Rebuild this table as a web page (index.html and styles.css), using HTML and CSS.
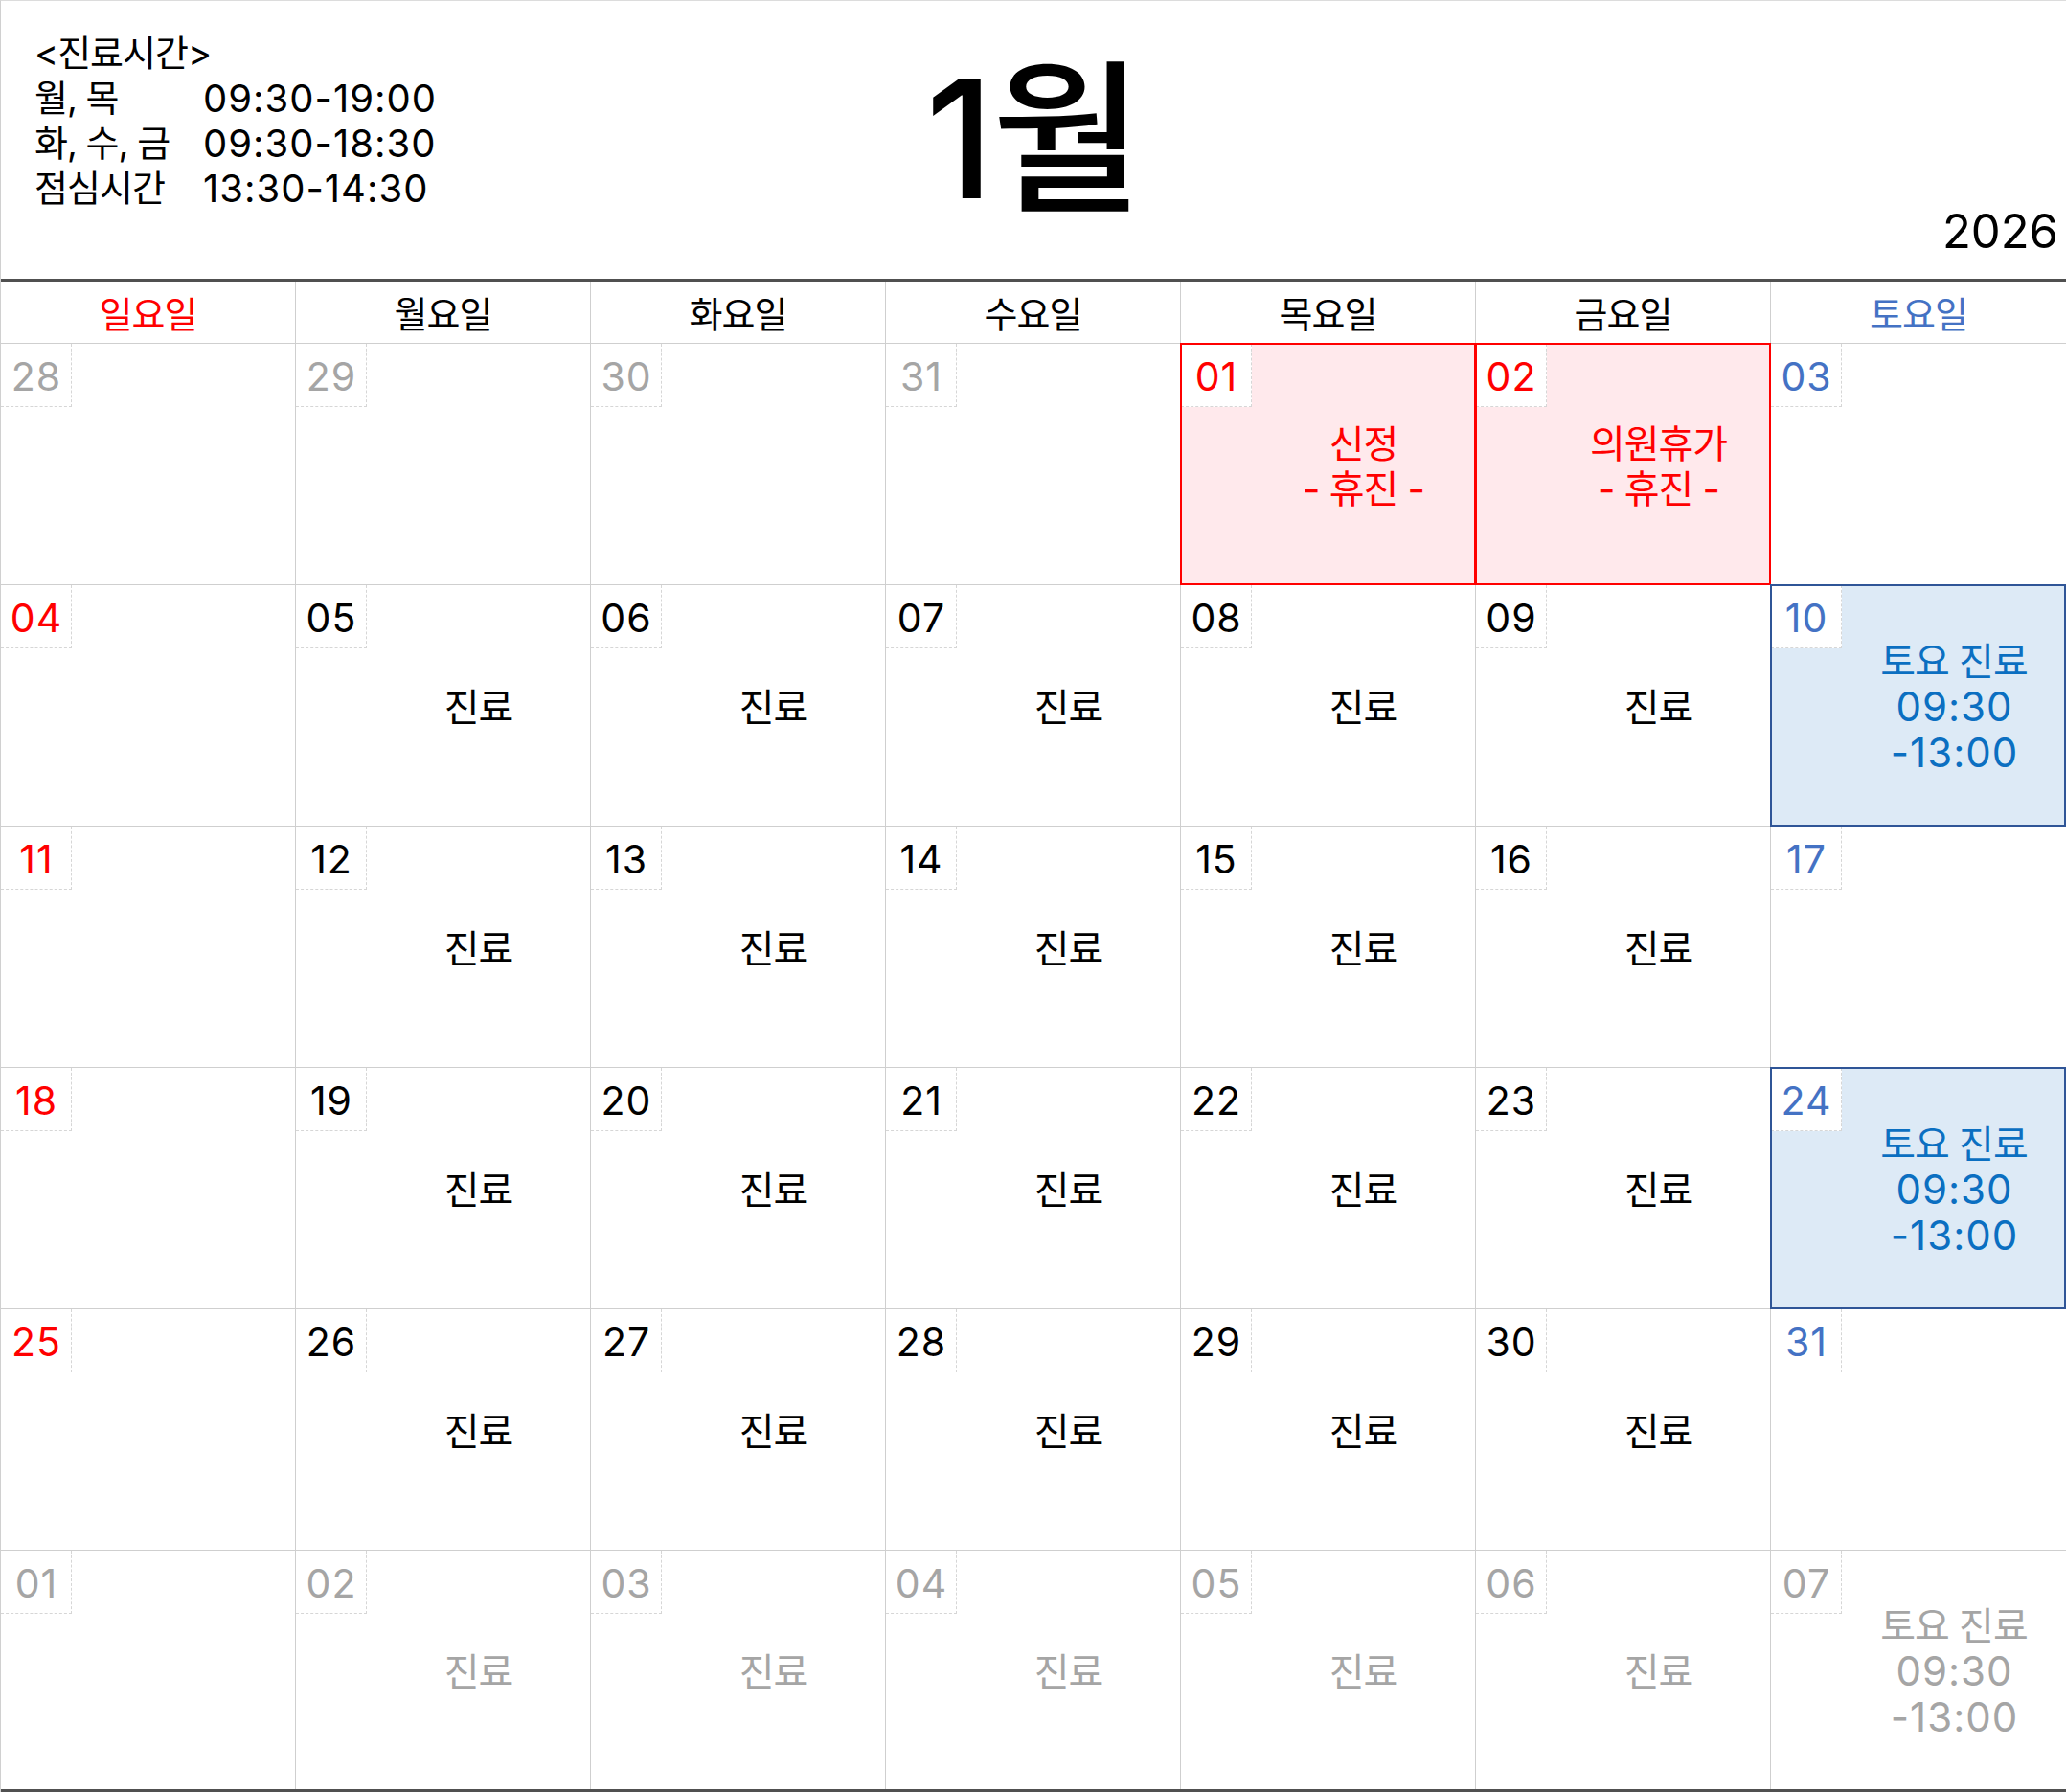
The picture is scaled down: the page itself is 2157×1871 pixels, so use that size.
FILE: index.html
```html
<!DOCTYPE html>
<html lang="ko">
<head>
<meta charset="utf-8">
<title>1월 진료 달력</title>
<link rel="stylesheet" href="styles.css">
</head>
<body>
<div class="page">
  <header class="top">
    <div class="hours">
      <div class="hours-title">&lt;진료시간&gt;</div>
      <span class="lbl">월, 목</span><span class="tm">09:30-19:00</span>
      <span class="lbl">화, 수, 금</span><span class="tm">09:30-18:30</span>
      <span class="lbl">점심시간</span><span class="tm">13:30-14:30</span>
    </div>
    <h1 class="month">1월</h1>
    <div class="year">2026</div>
  </header>

  <div class="cal">
    <div class="wd sun">일요일</div>
    <div class="wd">월요일</div>
    <div class="wd">화요일</div>
    <div class="wd">수요일</div>
    <div class="wd">목요일</div>
    <div class="wd">금요일</div>
    <div class="wd sat">토요일</div>

    <div class="cell"><div class="dnum muted">28</div><div class="note"></div></div>
    <div class="cell"><div class="dnum muted">29</div><div class="note"></div></div>
    <div class="cell"><div class="dnum muted">30</div><div class="note"></div></div>
    <div class="cell"><div class="dnum muted">31</div><div class="note"></div></div>
    <div class="cell holiday"><div class="dnum red">01</div><div class="note red">신정<br>- 휴진 -</div></div>
    <div class="cell holiday"><div class="dnum red">02</div><div class="note red">의원휴가<br>- 휴진 -</div></div>
    <div class="cell"><div class="dnum blue">03</div><div class="note"></div></div>

    <div class="cell"><div class="dnum red">04</div><div class="note"></div></div>
    <div class="cell"><div class="dnum">05</div><div class="note">진료</div></div>
    <div class="cell"><div class="dnum">06</div><div class="note">진료</div></div>
    <div class="cell"><div class="dnum">07</div><div class="note">진료</div></div>
    <div class="cell"><div class="dnum">08</div><div class="note">진료</div></div>
    <div class="cell"><div class="dnum">09</div><div class="note">진료</div></div>
    <div class="cell satbox"><div class="dnum blue">10</div><div class="note satnote">토요 진료<br><span class="num">09:30</span><br><span class="num">-13:00</span></div></div>

    <div class="cell"><div class="dnum red">11</div><div class="note"></div></div>
    <div class="cell"><div class="dnum">12</div><div class="note">진료</div></div>
    <div class="cell"><div class="dnum">13</div><div class="note">진료</div></div>
    <div class="cell"><div class="dnum">14</div><div class="note">진료</div></div>
    <div class="cell"><div class="dnum">15</div><div class="note">진료</div></div>
    <div class="cell"><div class="dnum">16</div><div class="note">진료</div></div>
    <div class="cell"><div class="dnum blue">17</div><div class="note"></div></div>

    <div class="cell"><div class="dnum red">18</div><div class="note"></div></div>
    <div class="cell"><div class="dnum">19</div><div class="note">진료</div></div>
    <div class="cell"><div class="dnum">20</div><div class="note">진료</div></div>
    <div class="cell"><div class="dnum">21</div><div class="note">진료</div></div>
    <div class="cell"><div class="dnum">22</div><div class="note">진료</div></div>
    <div class="cell"><div class="dnum">23</div><div class="note">진료</div></div>
    <div class="cell satbox"><div class="dnum blue">24</div><div class="note satnote">토요 진료<br><span class="num">09:30</span><br><span class="num">-13:00</span></div></div>

    <div class="cell"><div class="dnum red">25</div><div class="note"></div></div>
    <div class="cell"><div class="dnum">26</div><div class="note">진료</div></div>
    <div class="cell"><div class="dnum">27</div><div class="note">진료</div></div>
    <div class="cell"><div class="dnum">28</div><div class="note">진료</div></div>
    <div class="cell"><div class="dnum">29</div><div class="note">진료</div></div>
    <div class="cell"><div class="dnum">30</div><div class="note">진료</div></div>
    <div class="cell"><div class="dnum blue">31</div><div class="note"></div></div>

    <div class="cell"><div class="dnum muted">01</div><div class="note"></div></div>
    <div class="cell"><div class="dnum muted">02</div><div class="note muted">진료</div></div>
    <div class="cell"><div class="dnum muted">03</div><div class="note muted">진료</div></div>
    <div class="cell"><div class="dnum muted">04</div><div class="note muted">진료</div></div>
    <div class="cell"><div class="dnum muted">05</div><div class="note muted">진료</div></div>
    <div class="cell"><div class="dnum muted">06</div><div class="note muted">진료</div></div>
    <div class="cell"><div class="dnum muted">07</div><div class="note muted">토요 진료<br><span class="num">09:30</span><br><span class="num">-13:00</span></div></div>
  </div>
</div>
</body>
</html>
```

FILE: styles.css
```css
* { box-sizing: border-box; }

html, body {
  margin: 0;
  padding: 0;
  background: #fff;
}

body {
  font-family: Inter, "Noto Sans CJK KR", sans-serif;
  color: #000;
}

.page {
  width: 2157px;
  height: 1871px;
  border-top: 1px solid #dcdcdc;
  border-left: 1px solid #d0d0d0;
  display: flex;
  flex-direction: column;
  overflow: hidden;
}

/* ---------- top header ---------- */
.top {
  height: 290px;
  display: grid;
  grid-template-columns: 1fr auto 1fr;
}

.hours {
  align-self: start;
  justify-self: start;
  margin: 31px 0 0 35px;
  display: grid;
  grid-template-columns: 176px auto;
  font-size: 38px;
  line-height: 47px;
}

.hours-title,
.lbl {
  letter-spacing: -1px;
}

.hours-title {
  grid-column: 1 / -1;
}

.tm {
  font-size: 40px;
  letter-spacing: 1px;
}

.month {
  margin: 57px 0 0 0;
  font-size: 172px;
  line-height: 172px;
  font-weight: 500;
  letter-spacing: -2px;
}

.year {
  align-self: end;
  justify-self: end;
  padding: 0 8px 25px 0;
  font-size: 49px;
  line-height: 49px;
}

/* ---------- calendar ---------- */
.cal {
  border-top: 3px solid #505050;
  border-bottom: 3px solid #505050;
  display: grid;
  grid-template-columns: repeat(7, 1fr);
  grid-template-rows: 65px repeat(5, 252px) 249px;
}

.wd {
  border-right: 1px solid #cfcfcf;
  border-bottom: 1px solid #cfcfcf;
  text-align: center;
  font-size: 38px;
  line-height: 58px;
  padding-top: 5px;
  letter-spacing: -1px;
}

.cal > :nth-child(7n) { border-right: none; }
.cal > :nth-last-child(-n+7) { border-bottom: none; }

.cell {
  position: relative;
  border-right: 1px solid #cfcfcf;
  border-bottom: 1px solid #cfcfcf;
  display: flex;
  align-items: center;
  min-width: 0;
}

.dnum {
  align-self: flex-start;
  flex: none;
  width: 74px;
  height: 66px;
  padding: 5px 0 0 1px;
  background: #fff;
  border-right: 1px dashed #d6d6d6;
  border-bottom: 1px dashed #d6d6d6;
  text-align: center;
  font-size: 41px;
  line-height: 59px;
  letter-spacing: 1px;
}

.note {
  flex: 1;
  text-align: center;
  font-size: 40px;
  line-height: 47px;
  padding-top: 4px;
  letter-spacing: -1px;
}

.num {
  font-size: 42px;
  letter-spacing: 1px;
  margin-right: -1px;
}

.holiday { background: #ffe9ec; }
.satbox { background: #ddeaf6; }

.holiday::after,
.satbox::after {
  content: "";
  position: absolute;
  top: -1px;
  left: -1px;
  right: -1px;
  bottom: -1px;
  border: 2px solid #ff0000;
  pointer-events: none;
}
.satbox::after {
  right: 0;
  border-color: #2f5597;
}

.sun, .red { color: #ff0000; }
.sat, .blue { color: #4472c4; }
.satnote { color: #0b6fc1; }
.muted { color: #a5a5a5; }
```
